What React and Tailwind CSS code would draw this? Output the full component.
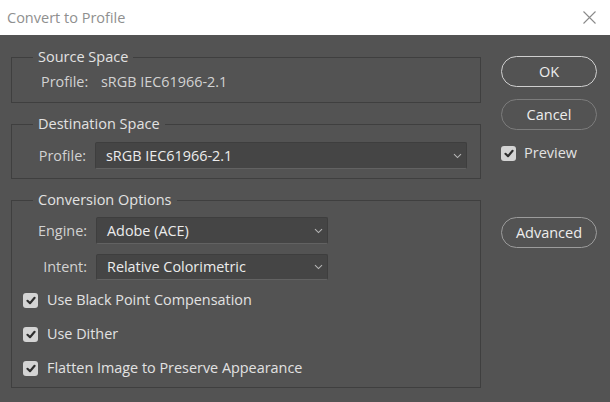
import React from "react";

const font = { fontFamily: '"Open Sans", "Noto Sans", sans-serif' };

const Check = ({ className = "" }) => (
  <span className={`flex h-[15px] w-[15px] shrink-0 items-center justify-center rounded-[3px] bg-[#d4d4d4] ${className}`}>
    <svg width="10" height="9" viewBox="0 0 10 9">
      <path d="M1.5 4.8 L4 7.2 L8.6 1.8" fill="none" stroke="#2e2e2e" strokeWidth="2.1" strokeLinecap="round" strokeLinejoin="round" />
    </svg>
  </span>
);

const Select = ({ value, className = "" }) => (
  <div className={`flex items-center justify-between rounded-[2px] border border-[#3e3e3e] border-b-[#626262] bg-[#454545] pl-[10px] pr-[4px] text-[#ececec] ${className}`}>
    <span>{value}</span>
    <svg width="9" height="6" viewBox="0 0 9 6">
      <path d="M1 1.2 L4.5 4.6 L8 1.2" fill="none" stroke="#b5b5b5" strokeWidth="1.1" />
    </svg>
  </div>
);

const Box = ({ title, children, className = "" }) => (
  <fieldset className={`border border-[#3f3f3f] ${className}`}>
    <legend className="ml-[21px] px-[5px] text-[14.5px] leading-[20px] text-[#e2e2e2]">{title}</legend>
    {children}
  </fieldset>
);

const Option = ({ label }) => (
  <div className="flex h-[20px] items-center gap-[9px] pl-[11px]">
    <Check />
    <span className="text-[#e2e2e2]">{label}</span>
  </div>
);

const Btn = ({ label, border }) => (
  <button className={`flex h-[31px] w-[96px] items-center justify-center rounded-full border-[1.5px] text-[14.5px] text-[#ededed] ${border}`}>
    {label}
  </button>
);

export default function App() {
  return (
    <div className="h-[402px] w-[610px] overflow-hidden bg-[#535353] text-[14.4px] leading-[20px]" style={font}>
      {/* title bar */}
      <div className="flex h-[35px] items-center justify-between bg-white pl-[7px] pr-[14px]">
        <span className="text-[14.5px] text-[#8f8f8f]">Convert to Profile</span>
        <svg width="13" height="13" viewBox="0 0 13 13">
          <path d="M0.5 0.5 L12.5 12.5 M12.5 0.5 L0.5 12.5" stroke="#8a8a8a" strokeWidth="1.1" />
        </svg>
      </div>

      <div className="flex pl-[11px] pt-[12px]">
        {/* left column */}
        <div className="flex w-[470px] flex-col gap-[11px]">
          <Box title="Source Space" className="h-[56px]">
            <div className="flex pl-[29px] pt-[5px]">
              <span className="w-[60px] text-[#d2d2d2]">Profile:</span>
              <span className="text-[#d2d2d2]">sRGB IEC61966-2.1</span>
            </div>
          </Box>

          <Box title="Destination Space" className="h-[65px]">
            <div className="flex items-center pt-[8px]">
              <span className="w-[83px] pr-[9px] text-right text-[#d2d2d2]">Profile:</span>
              <Select value="sRGB IEC61966-2.1" className="h-[27px] w-[372px]" />
            </div>
          </Box>

          <Box title="Conversion Options" className="h-[198px]">
            <div className="flex flex-col pt-[7px]">
              <div className="flex items-center">
                <span className="w-[84px] pr-[9px] text-right text-[#d2d2d2]">Engine:</span>
                <Select value="Adobe (ACE)" className="h-[27px] w-[232px]" />
              </div>
              <div className="mt-[10px] flex items-center">
                <span className="w-[84px] pr-[9px] text-right text-[#d2d2d2]">Intent:</span>
                <Select value="Relative Colorimetric" className="h-[26px] w-[232px]" />
              </div>
              <div className="mt-[10px] flex flex-col gap-[14px]">
                <Option label="Use Black Point Compensation" />
                <Option label="Use Dither" />
                <Option label="Flatten Image to Preserve Appearance" />
              </div>
            </div>
          </Box>
        </div>

        {/* right column */}
        <div className="ml-[20px] flex flex-col pt-[9px]">
          <Btn label="OK" border="border-[#cfcfcf]" />
          <div className="mt-[12px]">
            <Btn label="Cancel" border="border-[#7c7c7c]" />
          </div>
          <div className="mt-[13px] flex items-center gap-[8px]">
            <Check />
            <span className="text-[14.5px] text-[#e2e2e2]">Preview</span>
          </div>
          <div className="mt-[54px]">
            <Btn label="Advanced" border="border-[#9c9c9c]" />
          </div>
        </div>
      </div>
    </div>
  );
}
